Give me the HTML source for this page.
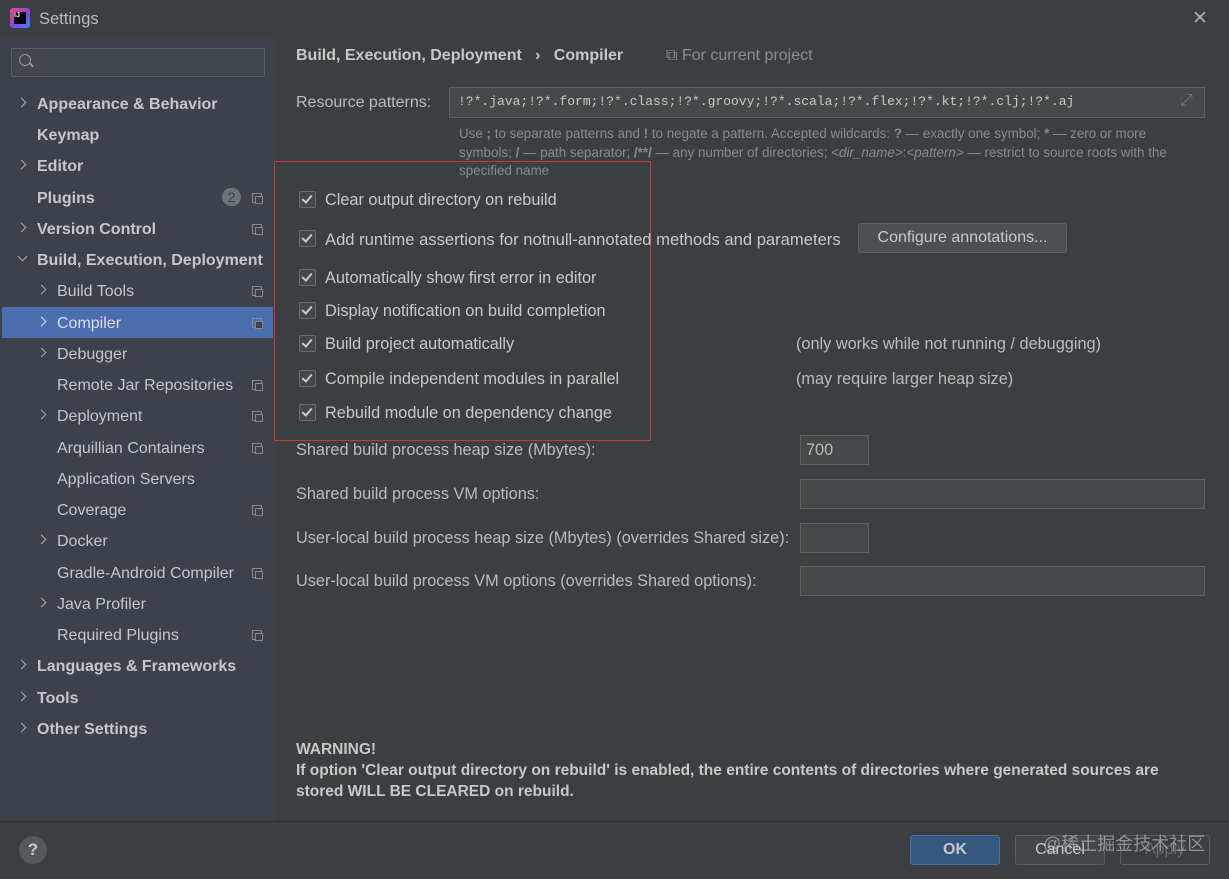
<!DOCTYPE html><html><head><style>
body{margin:0;width:1229px;height:879px;background:#3c3f41;font-family:"Liberation Sans",sans-serif;color:#bbbbbb;position:relative;overflow:hidden;font-size:16px}
.a{position:absolute;white-space:nowrap}
#side{position:absolute;left:0;top:38px;width:275px;height:783px;background:#3c414a}
.t{position:absolute;font-size:16px;color:#c4c7cc;margin-top:2px}
.b{font-weight:bold}
.ch{position:absolute;width:6px;height:6px;border-right:1.5px solid #aaa;border-bottom:1.5px solid #aaa;transform:rotate(-45deg)}
.chd{transform:rotate(45deg)}
.pi{position:absolute;width:8px;height:8px;border:1px solid #888;left:252px}
.pi:after{content:"";position:absolute;left:2px;top:2px;width:6px;height:6px;border:1px solid #888;background:#3c414a}
.cb{position:absolute;left:299px;width:15px;height:15px;border:1px solid #6b6b6b;border-radius:2px;background:#43494a}
.cb:after{content:"";position:absolute;left:4px;top:1px;width:4px;height:8px;border-right:2px solid #ccc;border-bottom:2px solid #ccc;transform:rotate(40deg)}
.lb{position:absolute;left:325px;font-size:16.3px;color:#c8c8c8;margin-top:1px}
.in{position:absolute;background:#45494a;border:1px solid #5e6060}
.btn{position:absolute;border:1px solid #5e6060;border-radius:3px;background:#4c5052;text-align:center;color:#c8c8c8;font-size:16px}
.r{font-size:16.3px;margin-top:1px}
</style></head><body>
<div class="a" style="left:10px;top:8px;width:20px;height:20px;background:linear-gradient(135deg,#fc3f6a,#7a4cf2 60%,#2a8df0);border-radius:3px"></div>
<div class="a" style="left:14px;top:12px;width:12px;height:12px;background:#000;color:#fff;font-size:7px;font-weight:bold;line-height:8px">IJ</div>
<div class="a" style="left:39px;top:10px;font-size:16.5px;color:#bbb">Settings</div>
<div class="a" style="left:1192px;top:7px;font-size:19px;color:#aaa">✕</div>
<div id="side"></div>
<div class="a" style="left:11px;top:48px;width:252px;height:27px;border:1px solid #5a5f62;border-radius:2px;background:#41464c"></div>
<div class="a" style="left:19px;top:54px;width:10px;height:10px;border:1.5px solid #999;border-radius:50%"></div>
<div class="a" style="left:29px;top:64px;width:5px;height:1.5px;background:#999;transform:rotate(45deg)"></div>
<div class="a" style="left:2px;top:307px;width:271px;height:31px;background:#4b6eaf"></div>
<div class="ch" style="left:18px;top:99px"></div><div class="t b" style="left:37px;top:94px">Appearance &amp; Behavior</div>
<div class="t b" style="left:37px;top:125px">Keymap</div>
<div class="ch" style="left:18px;top:161px"></div><div class="t b" style="left:37px;top:156px">Editor</div>
<div class="t b" style="left:37px;top:188px">Plugins</div>
<div class="a" style="left:222px;top:188px;width:19px;height:18px;border-radius:9px;background:#6e7377;color:#3c414a;font-size:14px;text-align:center;line-height:18px">2</div><div class="pi" style="top:193px"></div>
<div class="ch" style="left:18px;top:224px"></div><div class="t b" style="left:37px;top:219px">Version Control</div><div class="pi" style="top:224px"></div>
<div class="ch chd" style="left:19px;top:253px"></div><div class="t b" style="left:37px;top:250px">Build, Execution, Deployment</div>
<div class="ch" style="left:38px;top:286px"></div><div class="t" style="left:57px;top:281px">Build Tools</div><div class="pi" style="top:286px"></div>
<div class="ch" style="left:38px;top:318px;border-color:#ddd"></div><div class="t" style="left:57px;top:313px;color:#dde">Compiler</div><div class="pi" style="top:318px"></div>
<div class="ch" style="left:38px;top:349px"></div><div class="t" style="left:57px;top:344px">Debugger</div>
<div class="t" style="left:57px;top:375px">Remote Jar Repositories</div><div class="pi" style="top:380px"></div>
<div class="ch" style="left:38px;top:411px"></div><div class="t" style="left:57px;top:406px">Deployment</div><div class="pi" style="top:411px"></div>
<div class="t" style="left:57px;top:438px">Arquillian Containers</div><div class="pi" style="top:443px"></div>
<div class="t" style="left:57px;top:469px">Application Servers</div>
<div class="t" style="left:57px;top:500px">Coverage</div><div class="pi" style="top:505px"></div>
<div class="ch" style="left:38px;top:536px"></div><div class="t" style="left:57px;top:531px">Docker</div>
<div class="t" style="left:57px;top:563px">Gradle-Android Compiler</div><div class="pi" style="top:568px"></div>
<div class="ch" style="left:38px;top:599px"></div><div class="t" style="left:57px;top:594px">Java Profiler</div>
<div class="t" style="left:57px;top:625px">Required Plugins</div><div class="pi" style="top:630px"></div>
<div class="ch" style="left:18px;top:661px"></div><div class="t b" style="left:37px;top:656px">Languages &amp; Frameworks</div>
<div class="ch" style="left:18px;top:693px"></div><div class="t b" style="left:37px;top:688px">Tools</div>
<div class="ch" style="left:18px;top:724px"></div><div class="t b" style="left:37px;top:719px">Other Settings</div>

<div class="a b" style="left:296px;top:47px;font-size:16px;color:#c8c8c8">Build, Execution, Deployment &nbsp;&nbsp;›&nbsp;&nbsp; Compiler</div>
<div class="a" style="left:666px;top:47px;font-size:16px;color:#8c8c8c">⧉ For current project</div>
<div class="a" style="left:296px;top:94px;font-size:16px">Resource patterns:</div>
<div class="in" style="left:449px;top:87px;width:754px;height:29px"></div>
<div class="a" style="left:458px;top:94px;font-family:'Liberation Mono',monospace;font-size:13px;color:#c8c8c8">!?*.java;!?*.form;!?*.class;!?*.groovy;!?*.scala;!?*.flex;!?*.kt;!?*.clj;!?*.aj</div>
<div class="a" style="left:1180px;top:92px;color:#777;font-size:16px">⤢</div>
<div class="a" style="left:459px;top:125px;font-size:13.4px;color:#8a8a8a;line-height:18.5px;white-space:normal;width:735px">Use <b>;</b> to separate patterns and <b>!</b> to negate a pattern. Accepted wildcards: <b>?</b> — exactly one symbol; <b>*</b> — zero or more symbols; <b>/</b> — path separator; <b>/**/</b> — any number of directories; <i>&lt;dir_name&gt;</i>:<i>&lt;pattern&gt;</i> — restrict to source roots with the specified name</div>
<div class="a" style="left:274px;top:161px;width:375px;height:278px;border:1px solid #c8383c"></div>
<div class="cb" style="top:191px"></div><div class="lb" style="top:190px">Clear output directory on rebuild</div>
<div class="cb" style="top:230px"></div><div class="lb" style="top:229px;font-size:16.6px">Add runtime assertions for notnull-annotated methods and parameters</div>
<div class="btn" style="left:858px;top:223px;width:207px;height:28px;line-height:28px">Configure annotations...</div>
<div class="cb" style="top:269px"></div><div class="lb" style="top:268px">Automatically show first error in editor</div>
<div class="cb" style="top:302px"></div><div class="lb" style="top:301px">Display notification on build completion</div>
<div class="cb" style="top:335px"></div><div class="lb" style="top:334px">Build project automatically</div>
<div class="a r" style="left:796px;top:334px">(only works while not running / debugging)</div>
<div class="cb" style="top:370px"></div><div class="lb" style="top:369px">Compile independent modules in parallel</div>
<div class="a r" style="left:796px;top:369px">(may require larger heap size)</div>
<div class="cb" style="top:404px"></div><div class="lb" style="top:403px">Rebuild module on dependency change</div>
<div class="a r" style="left:296px;top:440px">Shared build process heap size (Mbytes):</div>
<div class="in" style="left:800px;top:435px;width:67px;height:28px"></div><div class="a r" style="left:806px;top:440px">700</div>
<div class="a r" style="left:296px;top:484px">Shared build process VM options:</div>
<div class="in" style="left:800px;top:479px;width:403px;height:28px"></div>
<div class="a r" style="left:296px;top:528px">User-local build process heap size (Mbytes) (overrides Shared size):</div>
<div class="in" style="left:800px;top:523px;width:67px;height:28px"></div>
<div class="a r" style="left:296px;top:571px">User-local build process VM options (overrides Shared options):</div>
<div class="in" style="left:800px;top:566px;width:403px;height:28px"></div>
<div class="a b" style="left:296px;top:739px;font-size:15.5px;line-height:21px;color:#c8c8c8">WARNING!<br>If option 'Clear output directory on rebuild' is enabled, the entire contents of directories where generated sources are<br>stored WILL BE CLEARED on rebuild.</div>
<div class="a" style="left:0;top:821px;width:1229px;height:1px;background:#2e3133"></div>
<div class="a" style="left:19px;top:836px;width:28px;height:28px;border-radius:50%;background:#55595c;color:#ccc;text-align:center;line-height:28px;font-weight:bold;font-size:17px">?</div>
<div class="btn b" style="left:910px;top:835px;width:88px;height:28px;line-height:28px;background:#365880;border-color:#4c6f99">OK</div>
<div class="btn" style="left:1015px;top:835px;width:88px;height:28px;line-height:28px;background:#434749">Cancel</div>
<div class="btn" style="left:1120px;top:835px;width:88px;height:28px;line-height:28px;background:#3c3f41;color:#666">Apply</div>
<div class="a" style="left:1043px;top:830px;font-family:'Liberation Sans','Noto Sans CJK SC',sans-serif;font-size:18px;color:rgba(200,200,200,.6)">@稀土掘金技术社区</div>
</body></html>
